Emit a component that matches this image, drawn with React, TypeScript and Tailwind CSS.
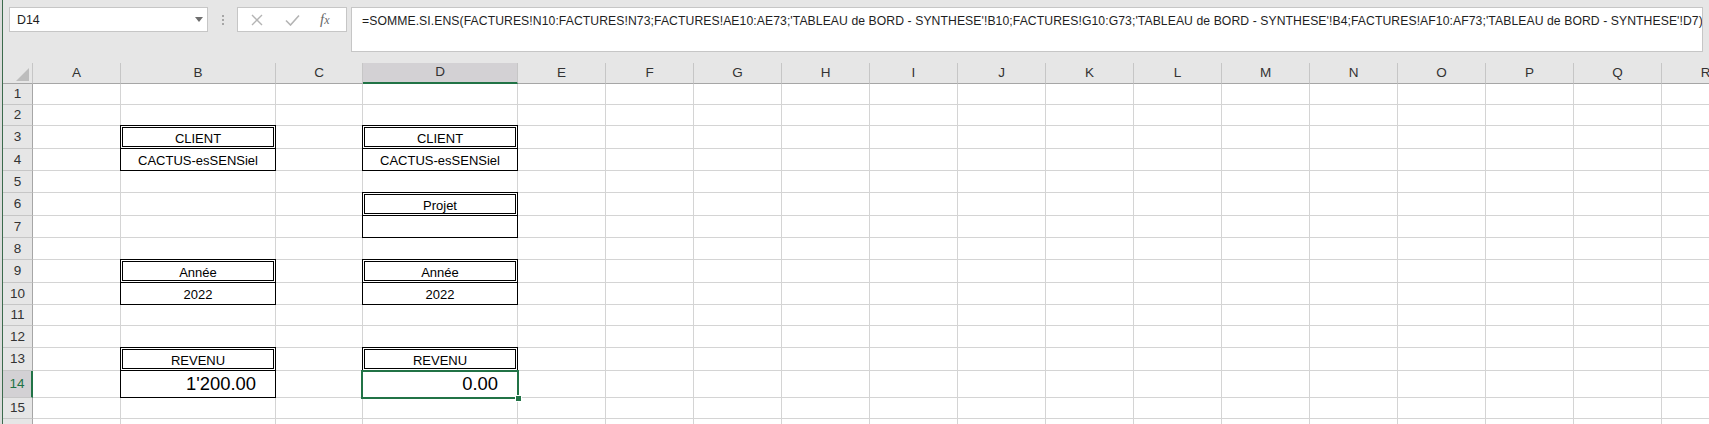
import React from 'react';

const COLS = ['A', 'B', 'C', 'D', 'E', 'F', 'G', 'H', 'I', 'J', 'K', 'L', 'M', 'N', 'O', 'P', 'Q', 'R'];
const ROWS = Array.from({ length: 16 }, (_, i) => i + 1);

type Spec = { text?: string; kind: 'double' | 'single' | 'selected'; big?: boolean };

const specs: Record<string, Spec> = {
  B3: { text: 'CLIENT', kind: 'double' },
  B4: { text: 'CACTUS-esSENSiel', kind: 'single' },
  D3: { text: 'CLIENT', kind: 'double' },
  D4: { text: 'CACTUS-esSENSiel', kind: 'single' },
  D6: { text: 'Projet', kind: 'double' },
  D7: { kind: 'single' },
  B9: { text: 'Année', kind: 'double' },
  B10: { text: '2022', kind: 'single' },
  D9: { text: 'Année', kind: 'double' },
  D10: { text: '2022', kind: 'single' },
  B13: { text: 'REVENU', kind: 'double' },
  B14: { text: "1'200.00", kind: 'single', big: true },
  D13: { text: 'REVENU', kind: 'double' },
  D14: { text: '0.00', kind: 'selected', big: true },
};

const FORMULA =
  "=SOMME.SI.ENS(FACTURES!N10:FACTURES!N73;FACTURES!AE10:AE73;'TABLEAU de BORD - SYNTHESE'!B10;FACTURES!G10:G73;'TABLEAU de BORD - SYNTHESE'!B4;FACTURES!AF10:AF73;'TABLEAU de BORD - SYNTHESE'!D7)";

function Cell({ id }: { id: string }) {
  const s = specs[id];
  if (!s) {
    return <div className="border-r border-b border-[#d4d4d4] bg-white" />;
  }
  return (
    <div
      className={
        'relative border-r border-b border-[#d4d4d4] bg-white flex items-center text-black ' +
        (s.big ? 'justify-end pr-[19px] text-[18.4px] pt-px' : 'justify-center text-[13px] pt-[2px]')
      }
    >
      {s.kind === 'double' && (
        <div className="pointer-events-none absolute -inset-px z-10 border-[3px] border-double border-black" />
      )}
      {s.kind === 'single' && (
        <div className="pointer-events-none absolute -inset-px z-10 border border-black" />
      )}
      {s.kind === 'selected' && (
        <>
          <div className="pointer-events-none absolute -left-[2px] -top-px -right-[2px] -bottom-[2px] z-20 border-2 border-[#217346]" />
          <div className="pointer-events-none absolute -right-[5px] -bottom-[5px] z-30 w-[7px] h-[7px] bg-[#217346] border border-white" />
        </>
      )}
      {s.text && <span className="relative z-0 leading-none">{s.text}</span>}
    </div>
  );
}

export default function App() {
  return (
    <div
      className="flex h-[424px] w-full overflow-hidden bg-[#e6e6e6]"
      style={{ fontFamily: '"Liberation Sans", Arial, sans-serif' }}
    >
      <div className="w-[3px] shrink-0 bg-[#dcdcdc] border-r border-[#3d6b4d]" />
      <div className="flex min-w-0 flex-1 flex-col">
        {/* Formula bar */}
        <div className="flex h-[63px] shrink-0 items-start bg-[#e6e6e6]">
          <div className="ml-[6px] mt-[7px] flex h-[25px] w-[199px] items-center justify-between border border-[#c6c6c6] bg-white pl-[7px] pr-[4px] pt-[2px] text-[12.4px] text-[#1e1e1e]">
            <span>D14</span>
            <svg width="8" height="5" viewBox="0 0 8 5" className="mb-[2px]">
              <polygon points="0,0 8,0 4,5" fill="#6e6e6e" />
            </svg>
          </div>
          <div className="ml-[14px] mt-[15px] flex w-[3px] flex-col gap-[2px]">
            <div className="h-[2px] w-[2px] bg-[#a6a6a6]" />
            <div className="h-[2px] w-[2px] bg-[#a6a6a6]" />
            <div className="h-[2px] w-[2px] bg-[#a6a6a6]" />
          </div>
          <div className="ml-[12px] mt-[7px] flex h-[25px] w-[110px] items-center border border-[#c6c6c6] bg-white">
            <svg width="12" height="12" viewBox="0 0 12 12" className="ml-[13px]">
              <path d="M1 1 L11 11 M11 1 L1 11" stroke="#b4b4b4" strokeWidth="1.4" fill="none" />
            </svg>
            <svg width="15" height="12" viewBox="0 0 15 12" className="ml-[22px]">
              <path d="M1 6.5 L5.5 11 L14 1.5" stroke="#b4b4b4" strokeWidth="1.6" fill="none" />
            </svg>
            <span
              className="ml-[20px] text-[15px] italic text-[#6a6a6a] leading-none"
              style={{ fontFamily: '"Liberation Serif", "Times New Roman", serif' }}
            >
              f<span className="text-[12px]">x</span>
            </span>
          </div>
          <div className="ml-[4px] mr-[6px] mt-[7px] h-[45px] min-w-0 flex-1 overflow-hidden whitespace-nowrap border border-[#c6c6c6] bg-white pl-[10px] pt-[6px] text-[12.2px] tracking-[0.08px] leading-[14px] text-[#1e1e1e]">
            {FORMULA}
          </div>
        </div>

        {/* Sheet */}
        <div className="min-h-0 flex-1 overflow-hidden bg-white">
          <div className="grid w-[1747px] grid-cols-[30px_88px_155px_87px_155px_88px_88px_88px_88px_88px_88px_88px_88px_88px_88px_88px_88px_88px_88px] grid-rows-[21px_21px_21px_23px_22px_22px_23px_22px_22px_23px_22px_21px_22px_23px_27px_21px_22px]">
            {/* corner */}
            <div className="flex items-end justify-end border-r border-b border-r-[#c6c6c6] border-b-[#a6a6a6] bg-[#e6e6e6] pr-[3px] pb-[2px]">
              <svg width="13" height="13" viewBox="0 0 13 13">
                <polygon points="13,0 13,13 0,13" fill="#bdbdbd" />
              </svg>
            </div>
            {COLS.map((c) =>
              c === 'D' ? (
                <div
                  key={c}
                  className="flex items-center justify-center border-r border-r-[#c6c6c6] border-b-2 border-b-[#217346] bg-[#d3d1d4] text-[13.5px] text-[#333]"
                >
                  {c}
                </div>
              ) : (
                <div
                  key={c}
                  className="flex items-center justify-center border-r border-b border-r-[#c6c6c6] border-b-[#a6a6a6] bg-[#e6e6e6] text-[13.5px] text-[#333]"
                >
                  {c}
                </div>
              )
            )}
            {ROWS.map((r) => (
              <React.Fragment key={r}>
                {r === 14 ? (
                  <div className="flex items-center justify-center border-b border-b-[#c6c6c6] border-r-2 border-r-[#217346] bg-[#d3d1d4] pt-px text-[13.5px] text-[#217346]">
                    {r}
                  </div>
                ) : (
                  <div className="flex items-center justify-center border-r border-b border-r-[#a6a6a6] border-b-[#c6c6c6] bg-[#e6e6e6] pt-px text-[13.5px] text-[#333]">
                    {r < 16 ? r : ''}
                  </div>
                )}
                {COLS.map((c) => (
                  <Cell key={c + r} id={c + r} />
                ))}
              </React.Fragment>
            ))}
          </div>
        </div>
      </div>
    </div>
  );
}
